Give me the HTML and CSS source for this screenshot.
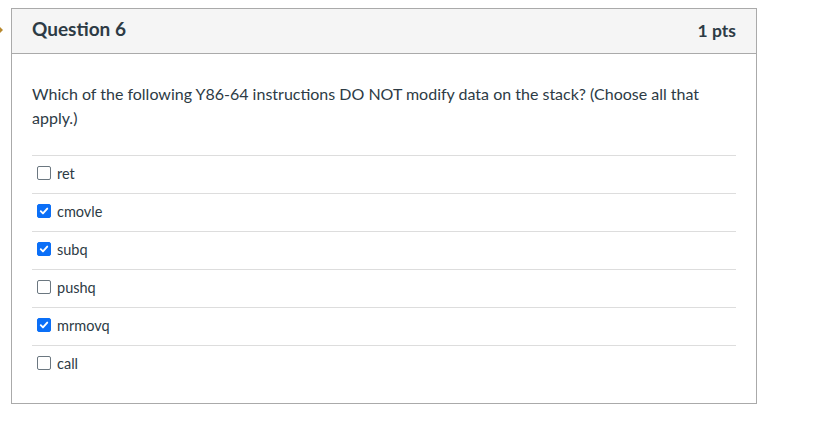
FILE: index.html
```html
<!DOCTYPE html>
<html>
<head>
<meta charset="utf-8">
<link rel="stylesheet" href="styles.css">
</head>
<body>
<div class="page">
  <span class="marker"></span>
  <div class="card">
    <div class="card-header">
      <span class="q-title">Question 6</span>
      <span class="q-pts">1 pts</span>
    </div>
    <div class="card-body">
      <p class="q-text">Which of the following Y86-64 instructions DO NOT modify data on the stack? (Choose all that apply.)</p>
      <div class="answers">
        <label class="answer"><span class="box"></span><span class="label">ret</span></label>
        <label class="answer"><span class="box checked"><svg viewBox="0 0 14 14" width="14" height="14"><path d="M3.2 7.2 L5.8 9.8 L10.8 4.2" fill="none" stroke="#fff" stroke-width="2.2" stroke-linecap="round" stroke-linejoin="round"/></svg></span><span class="label">cmovle</span></label>
        <label class="answer"><span class="box checked"><svg viewBox="0 0 14 14" width="14" height="14"><path d="M3.2 7.2 L5.8 9.8 L10.8 4.2" fill="none" stroke="#fff" stroke-width="2.2" stroke-linecap="round" stroke-linejoin="round"/></svg></span><span class="label">subq</span></label>
        <label class="answer"><span class="box"></span><span class="label">pushq</span></label>
        <label class="answer"><span class="box checked"><svg viewBox="0 0 14 14" width="14" height="14"><path d="M3.2 7.2 L5.8 9.8 L10.8 4.2" fill="none" stroke="#fff" stroke-width="2.2" stroke-linecap="round" stroke-linejoin="round"/></svg></span><span class="label">mrmovq</span></label>
        <label class="answer last"><span class="box"></span><span class="label">call</span></label>
      </div>
    </div>
  </div>
</div>
</body>
</html>
```

FILE: styles.css
```css
html, body {
  margin: 0;
  padding: 0;
  background: #fff;
  font-family: Lato, "Liberation Sans", sans-serif;
  color: #2d3b45;
}
.page {
  position: relative;
  padding: 8px 0 0 11px;
}
.marker {
  position: absolute;
  left: 0;
  top: 27px;
  width: 0;
  height: 0;
  border-top: 3px solid transparent;
  border-bottom: 3px solid transparent;
  border-left: 3px solid #b8892e;
}
.card {
  width: 744px;
  height: 394px;
  border: 1px solid #aaaaaa;
  box-sizing: content-box;
}
.card-header {
  height: 44px;
  background: #f5f5f5;
  border-bottom: 1px solid #aaaaaa;
  display: flex;
  align-items: center;
  justify-content: space-between;
  padding: 0 20px;
}
.q-title {
  font-size: 19px;
  font-weight: 700;
  color: #2d3b45;
  margin-top: -5px;
}
.q-pts {
  font-size: 17.5px;
  font-weight: 700;
  color: #2d3b45;
  margin-top: -1px;
}
.card-body {
  padding: 28px 20px 0 20px;
}
.q-text {
  margin: 0 0 25px 0;
  font-size: 16px;
  line-height: 24px;
  color: #2d3b45;
}
.answers {
  border-top: 1px solid #dddddd;
}
.answer {
  display: flex;
  align-items: center;
  height: 34px;
  padding-bottom: 3px;
  border-bottom: 1px solid #dddddd;
  padding-left: 5px;
  font-size: 14.5px;
}
.answer.last {
  border-bottom: none;
}
.box {
  width: 12px;
  height: 12px;
  border: 1px solid #6b7780;
  border-radius: 2px;
  margin-right: 6px;
  display: flex;
  align-items: center;
  justify-content: center;
  box-sizing: content-box;
}
.box.checked {
  background: #0b6ff7;
  border-color: #0b6ff7;
}
.box svg {
  display: block;
}
.label {
  color: #2d3b45;
}
```
